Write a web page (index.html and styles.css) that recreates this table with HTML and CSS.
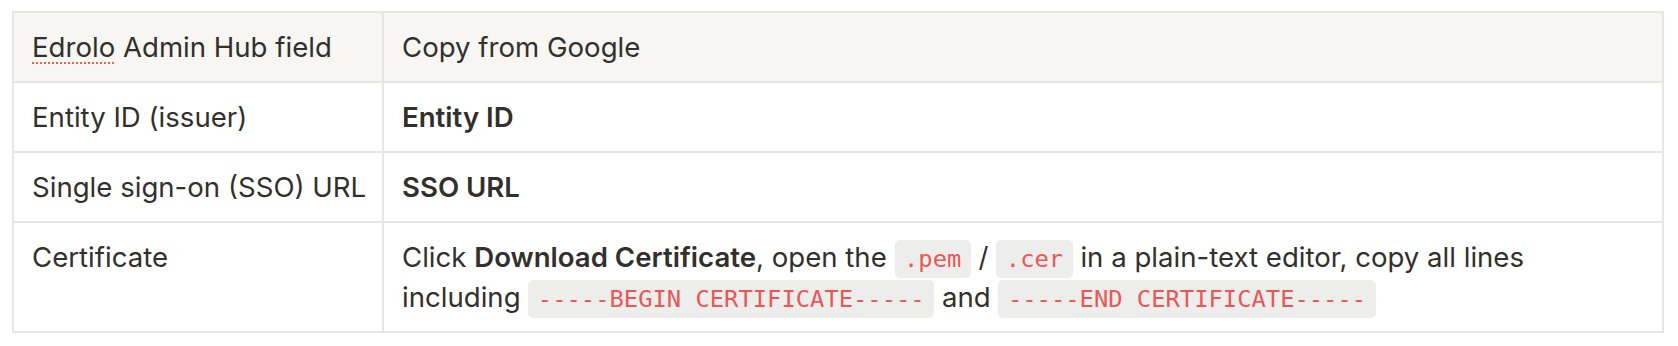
FILE: index.html
```html
<!DOCTYPE html>
<html lang="en">
<head>
    <meta charset="UTF-8">
    <meta name="viewport" content="width=device-width, initial-scale=1.0">
    <title>SSO field mapping</title>
    <link rel="stylesheet" href="styles.css">
</head>
<body>

    <!-- Field mapping: Admin Hub vs Google -->
    <table class="map-table">
        <tr class="head-row">
            <td class="col-field"><span class="spell">Edrolo</span> Admin Hub field</td>
            <td>Copy from Google</td>
        </tr>
        <tr>
            <td class="col-field">Entity ID (issuer)</td>
            <td><strong>Entity ID</strong></td>
        </tr>
        <tr>
            <td class="col-field">Single sign-on (SSO) URL</td>
            <td><strong>SSO URL</strong></td>
        </tr>
        <tr>
            <td class="col-field">Certificate</td>
            <td class="wrap-cell">Click <strong>Download Certificate</strong>, open the <code>.pem</code> / <code>.cer</code> in a plain-text editor, copy all lines including <code>-----BEGIN CERTIFICATE-----</code> and <code>-----END CERTIFICATE-----</code></td>
        </tr>
    </table>

</body>
</html>
```

FILE: styles.css
```css
/* General styling */
* {
    margin: 0;
    padding: 0;
    box-sizing: border-box;
}

body {
    background-color: #ffffff;
    font-family: Inter, "Noto Sans", sans-serif;
    font-size: 27.6px;
    line-height: 40px;
    color: #32302c;
    padding: 11px 14px 0 12px;
}

.map-table {
    width: 1652px;
    table-layout: fixed;
    border-collapse: separate;
    border-spacing: 0;
    border-top: 2px solid #e6e6e4;
    border-left: 2px solid #e6e6e4;
}

.map-table td {
    padding: 14px 18px;
    vertical-align: top;
    border-right: 2px solid #e6e6e4;
    border-bottom: 2px solid #e6e6e4;
}

.map-table .col-field {
    width: 370px;
    white-space: nowrap;
}

.head-row td {
    background-color: #f7f6f3;
}

.map-table strong {
    font-weight: 600;
}

/* keeps the long sentence breaking after "copy all lines" */
.wrap-cell {
    padding-right: 60px !important;
}

code {
    font-family: "DejaVu Sans Mono", "Liberation Mono", monospace;
    font-size: 23.8px;
    line-height: 1;
    color: #eb5757;
    background-color: #ededeb;
    padding: 0.2em 0.4em;
    border-radius: 5px;
    white-space: nowrap;
}

/* red dotted spell-check mark */
.spell {
    background-image: linear-gradient(to right, #e2645c 50%, transparent 50%);
    background-size: 4px 2px;
    background-repeat: repeat-x;
    background-position: 0 100%;
}
```
